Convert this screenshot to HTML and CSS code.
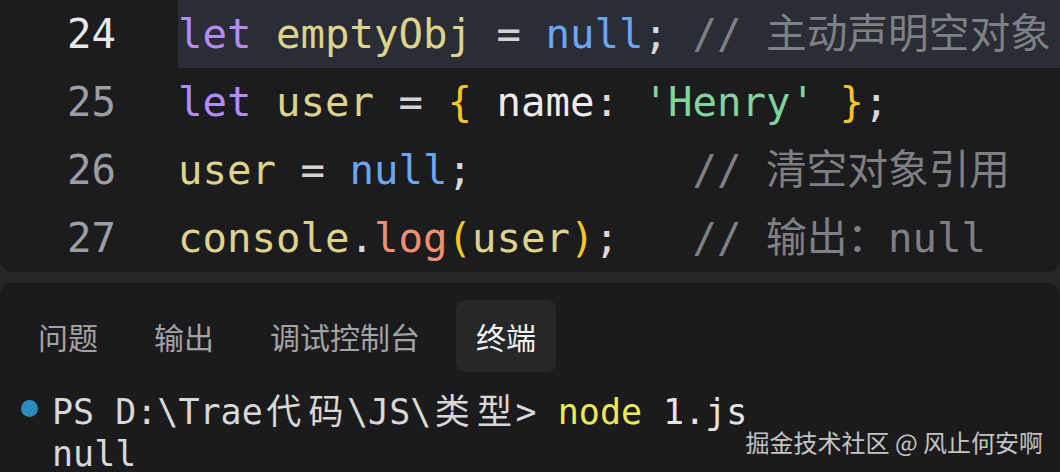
FILE: index.html
```html
<!DOCTYPE html>
<html lang="zh-CN">
<head>
<meta charset="utf-8">
<title>Editor</title>
<link rel="stylesheet" href="styles.css">
</head>
<body>
<div class="app">
  <section class="editor">
    <div class="line active"><span class="ln">24</span><span class="code"><span class="kw">let</span> <span class="var">emptyObj</span> <span class="op">=</span> <span class="nul">null</span><span class="pun">;</span> <span class="cm">// 主动声明空对象</span></span></div>
    <div class="line"><span class="ln">25</span><span class="code"><span class="kw">let</span> <span class="var">user</span> <span class="op">=</span> <span class="br">{</span> <span class="prop">name</span><span class="pun">:</span> <span class="str">'Henry'</span> <span class="br">}</span><span class="pun">;</span></span></div>
    <div class="line"><span class="ln">26</span><span class="code"><span class="var">user</span> <span class="op">=</span> <span class="nul">null</span><span class="pun">;</span>         <span class="cm">// 清空对象引用</span></span></div>
    <div class="line"><span class="ln">27</span><span class="code"><span class="var">console</span><span class="pun">.</span><span class="fn">log</span><span class="br">(</span><span class="var">user</span><span class="br">)</span><span class="pun">;</span>   <span class="cm">// 输出：null</span></span></div>
  </section>
  <section class="panel">
    <nav class="tabs">
      <span class="tab">问题</span>
      <span class="tab">输出</span>
      <span class="tab">调试控制台</span>
      <span class="tab on">终端</span>
    </nav>
    <div class="term">
      <div class="tline"><span class="dot"></span><span class="ttext">PS D:\Trae<span class="w">代</span><span class="w">码</span>\JS\<span class="w">类</span><span class="w">型</span>&gt; <span class="cmd">node</span> <span class="arg">1.js</span></span></div>
      <div class="tline"><span class="ttext">null</span></div>
    </div>
    <div class="watermark">掘金技术社区 @ 风止何安啊</div>
  </section>
</div>
</body>
</html>
```
FILE: styles.css
```css
html, body {
  margin: 0;
  padding: 0;
}
body {
  background: #262629;
  width: 1060px;
  height: 472px;
  overflow: hidden;
}
.app {
  display: flex;
  flex-direction: column;
  gap: 11px;
  height: 472px;
}
.editor {
  background: #1c1c1e;
  border-radius: 0 0 12px 12px;
  height: 272px;
  flex: none;
  overflow: hidden;
  font-family: "DejaVu Sans Mono", "Noto Sans CJK SC", monospace;
  font-size: 40.7px;
}
.line {
  display: flex;
  height: 68px;
  line-height: 68px;
  white-space: pre;
}
.ln {
  width: 116px;
  text-align: right;
  color: #9c9ea5;
  flex: none;
}
.line.active .ln { color: #e8e8ec; }
.code {
  display: block;
  margin-left: 62px;
  flex: 1;
  height: 68px;
  white-space: pre;
  color: #e0e0e0;
}
.line.active .code { background: #2a2d35; }
.kw { color: #b48cf6; }
.var { color: #ddd38c; }
.op { color: #d2d2d4; }
.nul { color: #6ba6f3; }
.pun { color: #d8d8da; }
.cm { color: #7e8084; }
.br { color: #f6c723; }
.prop { color: #ececec; }
.str { color: #80d49d; }
.fn { color: #ee9173; }

.panel {
  flex: 1;
  position: relative;
  background: #1b1b1d;
  border-radius: 12px 12px 0 0;
  padding: 17px 18px 0 18px;
  overflow: hidden;
}
.tabs {
  display: flex;
  gap: 16px;
  font-family: "Noto Sans CJK SC", "Noto Sans", sans-serif;
  font-size: 30px;
}
.tab {
  height: 72px;
  padding: 0 20px;
  display: flex;
  align-items: center;
  color: #a3a3a6;
  border-radius: 9px;
}
.tab.on {
  background: #262729;
  color: #f2f2f2;
}
.term {
  margin-top: 14px;
  font-family: "DejaVu Sans Mono", "Noto Sans CJK SC", monospace;
  font-size: 35px;
  color: #d8d8d8;
}
.tline {
  display: flex;
  align-items: center;
  height: 45px;
  white-space: pre;
  position: relative;
}
.dot {
  position: absolute;
  left: 3px;
  width: 17px;
  height: 17px;
  border-radius: 50%;
  background: #2a8cbc;
}
.ttext { margin-left: 34px; }
.w {
  display: inline-block;
  width: 2ch;
  text-align: center;
}
.cmd { color: #ecec52; }
.arg { color: #e4e4e4; }
.watermark {
  position: absolute;
  right: 17px;
  top: 141px;
  font-family: "Noto Sans CJK SC", "Noto Sans", sans-serif;
  font-size: 24px;
  color: rgba(235, 235, 235, 0.82);
}
```
